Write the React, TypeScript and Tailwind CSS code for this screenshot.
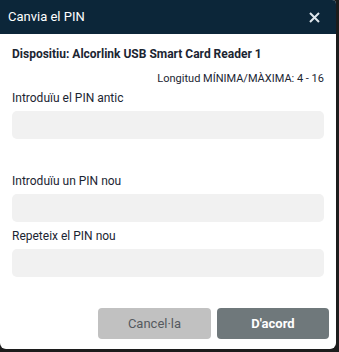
export default function App() {
  return (
    <div className="w-[339px] h-[352px] bg-[#1c1c1c] font-['Roboto',sans-serif]">
      <div className="w-[336px] h-[349px] bg-white rounded-tr-[4px] rounded-b-[6px] flex flex-col overflow-hidden">
        <div className="h-[34px] bg-[#0c2639] flex items-center justify-between pl-[8px] pr-[16px] text-white">
          <span className="text-[13px]">Canvia el PIN</span>
          <svg width="11" height="11" viewBox="0 0 11 11" className="text-[#dfe6ec]">
            <path d="M1 1 L10 10 M10 1 L1 10" stroke="currentColor" strokeWidth="2" />
          </svg>
        </div>
        <div className="flex flex-col px-[12px] text-[#1b2532]">
          <div className="mt-[12px] text-[12px] font-bold leading-[16px]">
            Dispositiu: Alcorlink USB Smart Card Reader 1
          </div>
          <div className="mt-[10px] text-right text-[11px] leading-[14px]">Longitud MÍNIMA/MÀXIMA: 4 - 16</div>
          <label className="mt-[4px] text-[12px] leading-[16px]">Introduïu el PIN antic</label>
          <div className="mt-[5px] h-[28px] bg-[#f1f1f1] rounded-[5px]" />
          <label className="mt-[34px] text-[12px] leading-[16px]">Introduïu un PIN nou</label>
          <div className="mt-[5px] h-[28px] bg-[#f1f1f1] rounded-[5px]" />
          <label className="mt-[6px] text-[12px] leading-[16px]">Repeteix el PIN nou</label>
          <div className="mt-[5px] h-[28px] bg-[#f1f1f1] rounded-[5px]" />
        </div>
        <div className="mt-auto mb-[10px] flex justify-end gap-[6px] pr-[7px]">
          <button className="w-[113px] h-[31px] rounded-[4px] bg-[#c1c1c1] text-[#555a5f] text-[13px]">Cancel·la</button>
          <button className="w-[112px] h-[31px] rounded-[4px] bg-[#6f787b] text-white text-[13px] font-bold">D'acord</button>
        </div>
      </div>
    </div>
  );
}
